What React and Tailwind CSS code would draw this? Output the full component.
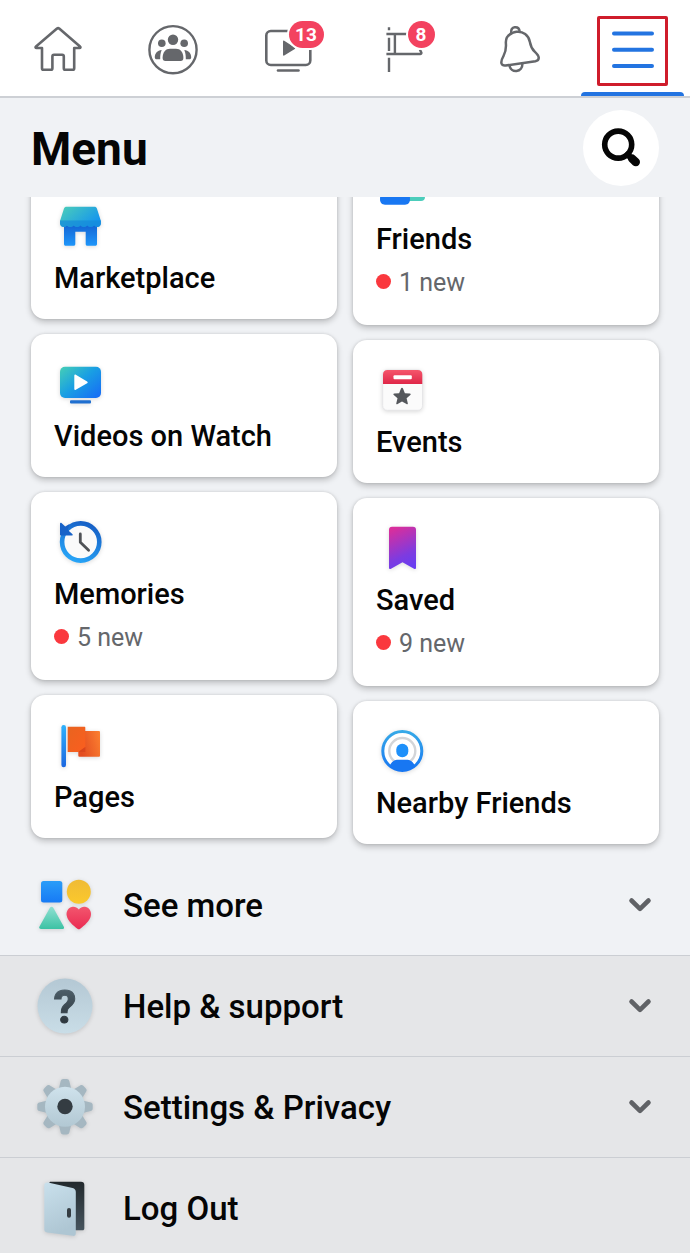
import React from 'react';

const HomeIcon = () => (
  <svg viewBox="0 0 60 60" className="w-[60px] h-[60px]" fill="none" stroke="#65676b" strokeWidth="2.6" strokeLinejoin="round" strokeLinecap="round">
    <path d="M29 10.6a1.8 1.8 0 0 1 2.2 0L52 28.4c.9.8.5 1.6-.5 1.6h-5.300v20.2c0 1-.6 1.6-1.6 1.6h-7.200c-1 0-1.600-.6-1.600-1.600V38.400c0-1-.6-1.600-1.600-1.600h-8.200c-1 0-1.600.6-1.600 1.600v11.800c0 1-.6 1.600-1.600 1.600h-7.200c-1 0-1.600-.6-1.600-1.600V30H8.500c-1 0-1.400-.8-.5-1.600z" />
  </svg>
);

const GroupsIcon = () => (
  <svg viewBox="0 0 60 60" className="w-[60px] h-[60px]" fill="#65676b">
    <circle cx="30" cy="31.7" r="23.6" fill="none" stroke="#65676b" strokeWidth="2.4" />
    <circle cx="30" cy="21.8" r="5.2" />
    <circle cx="18.8" cy="25.3" r="3.8" />
    <circle cx="41.2" cy="25.3" r="3.8" />
    <path d="M19.6 40c0-6 3.2-9.3 7.4-9.3h6c4.2 0 7.4 3.3 7.4 9.3 0 2-1 3-2.8 3H22.4c-1.8 0-2.8-1-2.8-3z" />
    <path d="M18.7 32c-4.3.2-6.9 3.6-6.9 7.3 0 1.4.7 2 2 2h3.4c0-3.5.2-6.5 1.5-9.3zM41.3 32c4.3.2 6.9 3.6 6.9 7.3 0 1.4-.7 2-2 2h-3.4c0-3.5-.2-6.5-1.5-9.3z" />
  </svg>
);

const WatchIcon = () => (
  <svg viewBox="0 0 60 60" className="w-[60px] h-[60px]" fill="none" stroke="#65676b" strokeWidth="2.6" strokeLinecap="round">
    <rect x="8.3" y="13" width="44" height="34" rx="4.5" />
    <path d="M20 52.5h20.5" />
    <path d="M25 23.5v13.3c0 .8.6 1 1.2.7l10.6-6.600c.6-.4.6-1 0-1.400l-10.600-6.700c-.6-.4-1.200-.1-1.200.7z" fill="#65676b" stroke="none" />
  </svg>
);

const FlagIcon = () => (
  <svg viewBox="0 0 60 60" className="w-[60px] h-[60px]" fill="none" stroke="#65676b" strokeWidth="2.4">
    <path d="M16 9.2v3M16 19.7v13.3M16 39.7v14.3M13.4 16H34M21.9 16v19.7M13.4 36h33.8c1 0 1.4-.6 1.2-1.4l-1.500-3" />
  </svg>
);

const BellIcon = () => (
  <svg viewBox="0 0 60 60" className="w-[60px] h-[60px]" fill="none" stroke="#65676b" strokeWidth="2.5" strokeLinejoin="round" strokeLinecap="round">
    <path d="M24.3 15c-4.400 1.800-6.800 6-6.400 10.700.4 5.300-.2 8.300-2.400 12.300-1.700 3-2.600 5.300-2 7.400.6 1.800 2 2.400 4.200 2.100l29.700-4.300c2.300-.4 3.500-1.800 3.300-3.700-.2-2-1.600-3.500-4-5.800-2.700-2.600-4-5-4.800-9.700-1.200-7-7-11-13.400-10.200-1.500.2-3 .6-4.200 1.200z" />
    <path d="M23.2 14.800c-.5-3 1-5.200 3.500-5.500 2.600-.3 4.600 1.400 5 4.300" />
    <path d="M21.5 47.500c.7 3.600 3.600 5.900 7 5.500 3.600-.4 6-3.500 5.900-7.200" />
  </svg>
);

const MenuIcon = () => (
  <svg viewBox="0 0 60 60" className="w-[60px] h-[60px]" stroke="#2374e1" strokeWidth="4" strokeLinecap="round">
    <path d="M11 15.500h38M11 31.800h38M11 48h38" />
  </svg>
);

const SearchIcon = () => (
  <svg viewBox="0 0 40 40" className="w-10 h-10" fill="none" stroke="#050505" strokeLinecap="round">
    <circle cx="17.2" cy="16.6" r="13.5" strokeWidth="5.600" />
    <path d="M26.5 26.500l5 5" strokeWidth="6" />
    <path d="M31 30.500l3.800 3.600" strokeWidth="8.400" />
  </svg>
);

const MarketplaceIcon = () => (
  <svg viewBox="0 0 52 52" className="w-[52px] h-[52px] drop-shadow-sm">
    <defs>
      <linearGradient id="market-roof" x1="0" y1="0" x2="1" y2="0.6">
        <stop offset="0" stopColor="#4ccfb8" />
        <stop offset="1" stopColor="#1595ee" />
      </linearGradient>
      <linearGradient id="market-wall" x1="0" y1="0" x2="0" y2="1">
        <stop offset="0" stopColor="#1260d0" />
        <stop offset="1" stopColor="#1e96fa" />
      </linearGradient>
    </defs>
    <path d="M10 23h33v21c0 1.200-.6 1.800-1.800 1.800h-7.700c-1.200 0-1.800-.6-1.800-1.800V31.700H21.300V44c0 1.200-.6 1.800-1.800 1.800h-7.700c-1.200 0-1.800-.6-1.800-1.800z" fill="url(#market-wall)" />
    <path d="M12.700 6.700H40.300c1.400 0 2.200.6 2.600 1.800l4 12.500v2.500c0 2-1.600 3.400-3.400 3.400-1.500 0-2.700-.7-3.400-1.700-.8 1.100-1.800 1.700-3.400 1.700-1.500 0-2.600-.7-3.400-1.700-.8 1-2 1.700-3.400 1.700s-2.700-.7-3.400-1.700c-.8 1-2 1.700-3.400 1.700s-2.700-.7-3.400-1.700c-.8 1-2 1.700-3.500 1.700s-2.500-.6-3.300-1.700c-.7 1-1.800 1.700-3.300 1.700-2 0-3.600-1.400-3.600-3.400V21l4-12.500c.4-1.200 1.300-1.800 2.700-1.800z" fill="url(#market-roof)" />
    <path d="M6 20.500h40.900v3c0 2-1.600 3.400-3.400 3.400-1.500 0-2.700-.7-3.400-1.700-.8 1.100-1.800 1.700-3.400 1.700-1.500 0-2.600-.7-3.400-1.700-.8 1-2 1.700-3.400 1.700s-2.700-.7-3.400-1.700c-.8 1-2 1.700-3.400 1.700s-2.700-.7-3.400-1.700c-.8 1-2 1.700-3.500 1.700s-2.500-.6-3.300-1.700c-.7 1-1.800 1.700-3.300 1.700-2 0-3.600-1.400-3.600-3.400z" fill="#168ad8" opacity="0.7" />
  </svg>
);

const FriendsIcon = () => (
  <svg viewBox="0 0 52 52" className="w-[52px] h-[52px]">
    <circle cx="34" cy="16" r="7" fill="#4ccdbb" />
    <path d="M22 36c0-6 4-10 9-10h8c6 0 10 4 10 10 0 2.600-1.500 4-4 4H22z" fill="#4ccdbb" />
    <circle cx="19" cy="14" r="8" fill="#1877f2" />
    <path d="M4 38c0-7 5-12 11-12h8c6 0 11 5 11 12 0 4-2 5.700-5 5.700H9c-3 0-5-1.700-5-5.700z" fill="#1877f2" />
  </svg>
);

const VideosIcon = () => (
  <svg viewBox="0 0 52 52" className="w-[52px] h-[52px] drop-shadow-sm">
    <defs>
      <linearGradient id="videos-screen" x1="0" y1="0" x2="1" y2="0.9">
        <stop offset="0" stopColor="#45cfb6" />
        <stop offset="0.5" stopColor="#199fe3" />
        <stop offset="1" stopColor="#176ef5" />
      </linearGradient>
    </defs>
    <rect x="6" y="8.7" width="41" height="31.3" rx="5" fill="url(#videos-screen)" />
    <path d="M20.300 17.500v13.400c0 1 .8 1.300 1.500.8l11.300-6.500c.8-.5.8-1.300 0-1.800l-11.300-6.700c-.8-.4-1.500-.1-1.500.8z" fill="#fff" />
    <rect x="16" y="42.2" width="21" height="3.2" rx="1" fill="#1f6fd0" />
  </svg>
);

const EventsIcon = () => (
  <svg viewBox="0 0 52 52" className="w-[52px] h-[52px] drop-shadow-sm">
    <defs>
      <linearGradient id="events-top" x1="0" y1="0" x2="0" y2="1">
        <stop offset="0" stopColor="#f5566c" />
        <stop offset="1" stopColor="#df2748" />
      </linearGradient>
    </defs>
    <rect x="6.7" y="6" width="39.8" height="40.3" rx="4.5" fill="#fbfbfb" stroke="#e6e6e8" />
    <path d="M7 20v-9.500C7 7.500 8.700 6 11.500 6h30.300c2.800 0 4.500 1.500 4.500 4.500V20z" fill="url(#events-top)" />
    <rect x="17.5" y="11.3" width="18.3" height="4" rx="1" fill="#fff" />
    <path d="M26 23.800c.5 0 .8.3 1 .8l1.900 4.700 4.900.3c1 .1 1.200.9.500 1.500l-3.700 3.200 1.200 4.900c.2 1-.5 1.400-1.300.9L26 37.500l-4.400 2.600c-.9.5-1.500 0-1.300-.9l1.200-4.900-3.700-3.200c-.8-.6-.5-1.400.5-1.500l4.800-.3 1.900-4.700c.2-.5.5-.8 1-.8z" fill="#55585c" />
  </svg>
);

const MemoriesIcon = () => (
  <svg viewBox="0 0 52 52" className="w-[52px] h-[52px] drop-shadow-sm">
    <defs>
      <linearGradient id="memories-ring" x1="0.7" y1="0" x2="0.3" y2="1">
        <stop offset="0" stopColor="#1660c6" />
        <stop offset="1" stopColor="#27a4f7" />
      </linearGradient>
    </defs>
    <circle cx="26.7" cy="26" r="18.6" fill="#fafafa" stroke="url(#memories-ring)" strokeWidth="4.6" />
    <path d="M6 7.700c0-1 .8-1.300 1.500-.6l3.700 3.400L15.500 8l-1.700 6 4.500 4c.8.800.4 1.500-.5 1.500H7c-.7 0-1-.4-1-1z" fill="#1762c8" />
    <path d="M26.300 18v8.200l8.300 8" fill="none" stroke="#4f5256" strokeWidth="2.8" strokeLinecap="round" strokeLinejoin="round" />
  </svg>
);

const SavedIcon = () => (
  <svg viewBox="0 0 52 52" className="w-[52px] h-[52px] drop-shadow-sm">
    <defs>
      <linearGradient id="saved-ribbon" x1="0.3" y1="0" x2="0.6" y2="1">
        <stop offset="0" stopColor="#d92e9c" />
        <stop offset="0.7" stopColor="#7d3be0" />
        <stop offset="1" stopColor="#6a3df0" />
      </linearGradient>
    </defs>
    <path d="M16 4.700h21c2 0 3 1 3 3v38c0 1.300-1 1.700-2 1l-11.500-6.400L15 46.700c-1 .7-2 .3-2-1v-38c0-2 1-3 3-3z" fill="url(#saved-ribbon)" />
  </svg>
);

const PagesIcon = () => (
  <svg viewBox="0 0 52 52" className="w-[52px] h-[52px] drop-shadow-sm">
    <defs>
      <linearGradient id="pages-pole" x1="0" y1="0" x2="0" y2="1">
        <stop offset="0" stopColor="#2fb1fb" />
        <stop offset="1" stopColor="#1a66e0" />
      </linearGradient>
      <linearGradient id="pages-front" x1="0" y1="0" x2="1" y2="1">
        <stop offset="0" stopColor="#e8641f" />
        <stop offset="1" stopColor="#fb5e1f" />
      </linearGradient>
      <linearGradient id="pages-back" x1="0" y1="0.3" x2="1" y2="0">
        <stop offset="0" stopColor="#e34d20" />
        <stop offset="1" stopColor="#fc8030" />
      </linearGradient>
    </defs>
    <rect x="24.3" y="12" width="21.7" height="25.7" rx="1" fill="url(#pages-back)" />
    <path d="M13.700 7.700h16.600c.7 0 1 .4 1 1V28l-7 5H13.700z" fill="url(#pages-front)" />
    <path d="M24.300 33l7-5v5z" fill="#d9461c" />
    <rect x="7.4" y="6" width="4.6" height="42.3" rx="2.3" fill="url(#pages-pole)" />
  </svg>
);

const NearbyIcon = () => (
  <svg viewBox="0 0 52 52" className="w-[52px] h-[52px] drop-shadow-sm">
    <defs>
      <linearGradient id="nearby-ring" x1="0" y1="0" x2="0" y2="1">
        <stop offset="0" stopColor="#36a9e8" />
        <stop offset="1" stopColor="#1877f2" />
      </linearGradient>
      <clipPath id="nearby-clip">
        <circle cx="26.3" cy="26" r="20" />
      </clipPath>
    </defs>
    <circle cx="26.3" cy="26" r="19.5" fill="#fff" stroke="url(#nearby-ring)" strokeWidth="3" />
    <circle cx="26.3" cy="26" r="13" fill="#fff" stroke="#d3d5d8" strokeWidth="2.4" />
    <rect x="20.3" y="18.7" width="12" height="13.6" rx="5.8" fill="#1e90fa" />
    <path d="M12 48c1-9 5-13.300 9-13.300h10.600c4 0 8 4.300 9 13.300z" fill="#1877f2" clipPath="url(#nearby-clip)" />
  </svg>
);

const ShapesIcon = () => (
  <svg viewBox="0 0 56 56" className="w-14 h-14 drop-shadow-sm">
    <defs>
      <linearGradient id="shape-blue" x1="0" y1="0" x2="0" y2="1">
        <stop offset="0" stopColor="#2a9df8" />
        <stop offset="1" stopColor="#177af5" />
      </linearGradient>
      <linearGradient id="shape-yellow" x1="0" y1="0" x2="0" y2="1">
        <stop offset="0" stopColor="#efbb35" />
        <stop offset="1" stopColor="#fbc92c" />
      </linearGradient>
      <linearGradient id="shape-green" x1="0" y1="0" x2="0" y2="1">
        <stop offset="0" stopColor="#8fe0d2" />
        <stop offset="1" stopColor="#3cc2a4" />
      </linearGradient>
      <linearGradient id="shape-red" x1="0" y1="0" x2="0" y2="1">
        <stop offset="0" stopColor="#f3566e" />
        <stop offset="1" stopColor="#ea2b52" />
      </linearGradient>
    </defs>
    <rect x="4" y="4" width="21.3" height="21.5" rx="2.5" fill="url(#shape-blue)" />
    <circle cx="41.8" cy="14.8" r="12" fill="url(#shape-yellow)" />
    <path d="M12.900 30.800c.8-1.400 2.600-1.400 3.400 0l10.400 18.700c.8 1.400.2 2.500-1.400 2.500H4c-1.600 0-2.300-1.100-1.500-2.500z" fill="url(#shape-green)" />
    <path d="M41.800 32.600c2.200-3 5-3.400 7.200-2.600 3.800 1.200 5.700 5 4.800 9-1.200 5.200-6.400 9.500-10.600 12.700-.9.700-1.900.7-2.800 0-4.200-3.200-9.400-7.500-10.600-12.700-.9-4 1-7.800 4.800-9 2.200-.8 5-.4 7.200 2.600z" fill="url(#shape-red)" />
  </svg>
);

const HelpIcon = () => (
  <svg viewBox="0 0 56 56" className="w-14 h-14 drop-shadow-sm">
    <defs>
      <linearGradient id="help-disc" x1="0" y1="0" x2="0" y2="1">
        <stop offset="0" stopColor="#b4c8d4" />
        <stop offset="1" stopColor="#c9dde7" />
      </linearGradient>
      <linearGradient id="help-mark" x1="0" y1="0" x2="0" y2="1">
        <stop offset="0" stopColor="#566a76" />
        <stop offset="1" stopColor="#22292e" />
      </linearGradient>
    </defs>
    <circle cx="28" cy="28" r="27.5" fill="url(#help-disc)" />
    <text x="28" y="44.5" textAnchor="middle" fontFamily="Roboto, sans-serif" fontWeight="700" fontSize="46" fill="url(#help-mark)" stroke="url(#help-mark)" strokeWidth="1">?</text>
  </svg>
);

const teeth = [0, 45, 90, 135, 180, 225, 270, 315];

const SettingsIcon = () => (
  <svg viewBox="0 0 56 56" className="w-14 h-14 drop-shadow-sm">
    <defs>
      <linearGradient id="gear-disc" x1="0" y1="0" x2="0" y2="1">
        <stop offset="0" stopColor="#cfe2ec" />
        <stop offset="1" stopColor="#b2c8d3" />
      </linearGradient>
    </defs>
    {teeth.map(angle => (
      <path key={angle} d="M21.500 11l2.200-9c.3-1.300 1.200-2 2.500-2h3.600c1.300 0 2.200.7 2.500 2l2.200 9z" transform={`rotate(${angle} 28 27.7)`} fill="#a5b7c1" />
    ))}
    <circle cx="28" cy="27.7" r="20" fill="url(#gear-disc)" />
    <circle cx="28" cy="27.5" r="7.7" fill="#343c42" />
  </svg>
);

const LogOutIcon = () => (
  <svg viewBox="0 0 56 56" className="w-14 h-14 drop-shadow-sm">
    <defs>
      <linearGradient id="door-front" x1="0" y1="0" x2="0.3" y2="1">
        <stop offset="0" stopColor="#c9e0ec" />
        <stop offset="1" stopColor="#aec6d3" />
      </linearGradient>
      <linearGradient id="door-frame" x1="0" y1="0" x2="0" y2="1">
        <stop offset="0" stopColor="#22292d" />
        <stop offset="1" stopColor="#46545d" />
      </linearGradient>
    </defs>
    <path d="M13 1.700h31c2.200 0 3.300 1.100 3.300 3.300v43.500c0 1.200-.6 1.800-1.800 1.800H20L10.700 5z" fill="url(#door-frame)" />
    <path d="M11 2.500l24.500 5.600c2.200.5 3.300 1.900 3.300 4v41.200c0 2-1.200 2.900-3.200 2.500L10.200 52.500c-2-.3-2.900-1.300-2.900-3.200V5.500c0-2.300 1.400-3.500 3.700-3z" fill="url(#door-front)" />
    <rect x="30" y="28" width="4" height="9.8" rx="2" fill="#343c42" />
  </svg>
);

const ChevronIcon = () => (
  <svg viewBox="0 0 24 16" className="w-6 h-4" fill="none" stroke="#606266" strokeWidth="4.6" strokeLinecap="round" strokeLinejoin="round">
    <path d="M3.500 3.500L12 11.800l8.500-8.300" />
  </svg>
);

const tabs = [
  { label: 'Home', icon: HomeIcon },
  { label: 'Groups', icon: GroupsIcon },
  { label: 'Watch', icon: WatchIcon, badge: 13 },
  { label: 'Pages', icon: FlagIcon, badge: 8 },
  { label: 'Notifications', icon: BellIcon },
  { label: 'Menu', icon: MenuIcon, active: true }
];

const leftCards = [
  { title: 'Marketplace', icon: MarketplaceIcon },
  { title: 'Videos on Watch', icon: VideosIcon },
  { title: 'Memories', icon: MemoriesIcon, count: 5 },
  { title: 'Pages', icon: PagesIcon }
];

const rightCards = [
  { title: 'Friends', icon: FriendsIcon, count: 1 },
  { title: 'Events', icon: EventsIcon },
  { title: 'Saved', icon: SavedIcon, count: 9 },
  { title: 'Nearby Friends', icon: NearbyIcon }
];

const Tab = ({ label, icon: Icon, badge, active }) => (
  <button type="button" aria-label={label} className="relative flex items-center justify-center cursor-pointer">
    <span className="relative">
      <Icon />
      {badge && (
        <span
          className={`absolute top-[3px] h-[27px] rounded-full bg-[#f3425f] ring-2 ring-white text-white text-[19px] leading-[27px] font-bold text-center
            ${badge > 9 ? 'left-[31px] w-[35px]' : 'left-[35px] w-[27px]'}`}
        >
          {badge}
        </span>
      )}
    </span>
    {/* Highlight frame and underline of the current tab */}
    {active && (
      <>
        <span className="absolute top-4 inset-x-[22px] h-[70px] border-3 border-[#cf1c2b] rounded-xs"></span>
        <span className="absolute bottom-0 inset-x-1.5 h-1 bg-[#2374e1] rounded-t-sm"></span>
      </>
    )}
  </button>
);

const Card = ({ title, icon: Icon, count }) => (
  <button
    type="button"
    className="flex flex-col items-start px-[23px] py-6 bg-white rounded-[14px] shadow-[0_3px_6px_rgba(0,0,0,0.22),0_0_3px_rgba(0,0,0,0.12)] text-left cursor-pointer"
  >
    <Icon />
    <span className="mt-[10px] mb-px text-[29px] leading-8 font-medium text-[#050505]">{title}</span>
    {count && (
      <span className="flex items-center gap-2 mt-[9px] text-[25px] leading-9 text-[#65676b]">
        <span className="w-[15px] h-[15px] mb-1 rounded-full bg-[#fa383e]"></span>
        {count} new
      </span>
    )}
  </button>
);

const MenuRow = ({ title, icon: Icon, expandable = true, shaded = true }) => (
  <button
    type="button"
    className={`flex items-center w-full pl-[37px] pr-[38px] cursor-pointer text-left
      ${shaded ? 'h-[101px] bg-[#e5e6e8] border-t border-[#cbced3]' : 'h-[100px]'}`}
  >
    <Icon />
    <span className="ml-[30px] flex-1 pt-0.5 text-[33px] leading-10 font-medium text-[#050505]">{title}</span>
    {expandable && <ChevronIcon />}
  </button>
);

const App = () => {
  return (
    <div className="flex flex-col h-screen bg-[#f0f2f5] font-[Roboto,sans-serif]">
      <nav className="shrink-0 grid grid-cols-6 h-[98px] bg-white border-b-2 border-[#cdd0d5]">
        {tabs.map(tab => (
          <Tab key={tab.label} {...tab} />
        ))}
      </nav>

      <header className="shrink-0 flex items-center justify-between h-[99px] px-[31px]">
        <h1 className="pt-0.5 text-[46px] leading-[56px] font-bold text-[#050505]">Menu</h1>
        <button type="button" aria-label="Search" className="flex items-center justify-center w-[76px] h-[76px] rounded-full bg-white cursor-pointer">
          <SearchIcon />
        </button>
      </header>

      <main className="flex-1 min-h-0 overflow-y-auto [scrollbar-width:none]">
        {/* Shortcuts, scrolled partly under the title bar */}
        <section className="grid grid-cols-2 items-start gap-4 px-[31px] pb-[11px]">
          <div className="flex flex-col gap-[15px] -mt-[21px]">
            {leftCards.map(card => (
              <Card key={card.title} {...card} />
            ))}
          </div>
          <div className="flex flex-col gap-[15px] -mt-[60px]">
            {rightCards.map(card => (
              <Card key={card.title} {...card} />
            ))}
          </div>
        </section>

        <MenuRow title="See more" icon={ShapesIcon} shaded={false} />
        <MenuRow title="Help & support" icon={HelpIcon} />
        <MenuRow title="Settings & Privacy" icon={SettingsIcon} />
        <MenuRow title="Log Out" icon={LogOutIcon} expandable={false} />
      </main>
    </div>
  );
};

export default App;
